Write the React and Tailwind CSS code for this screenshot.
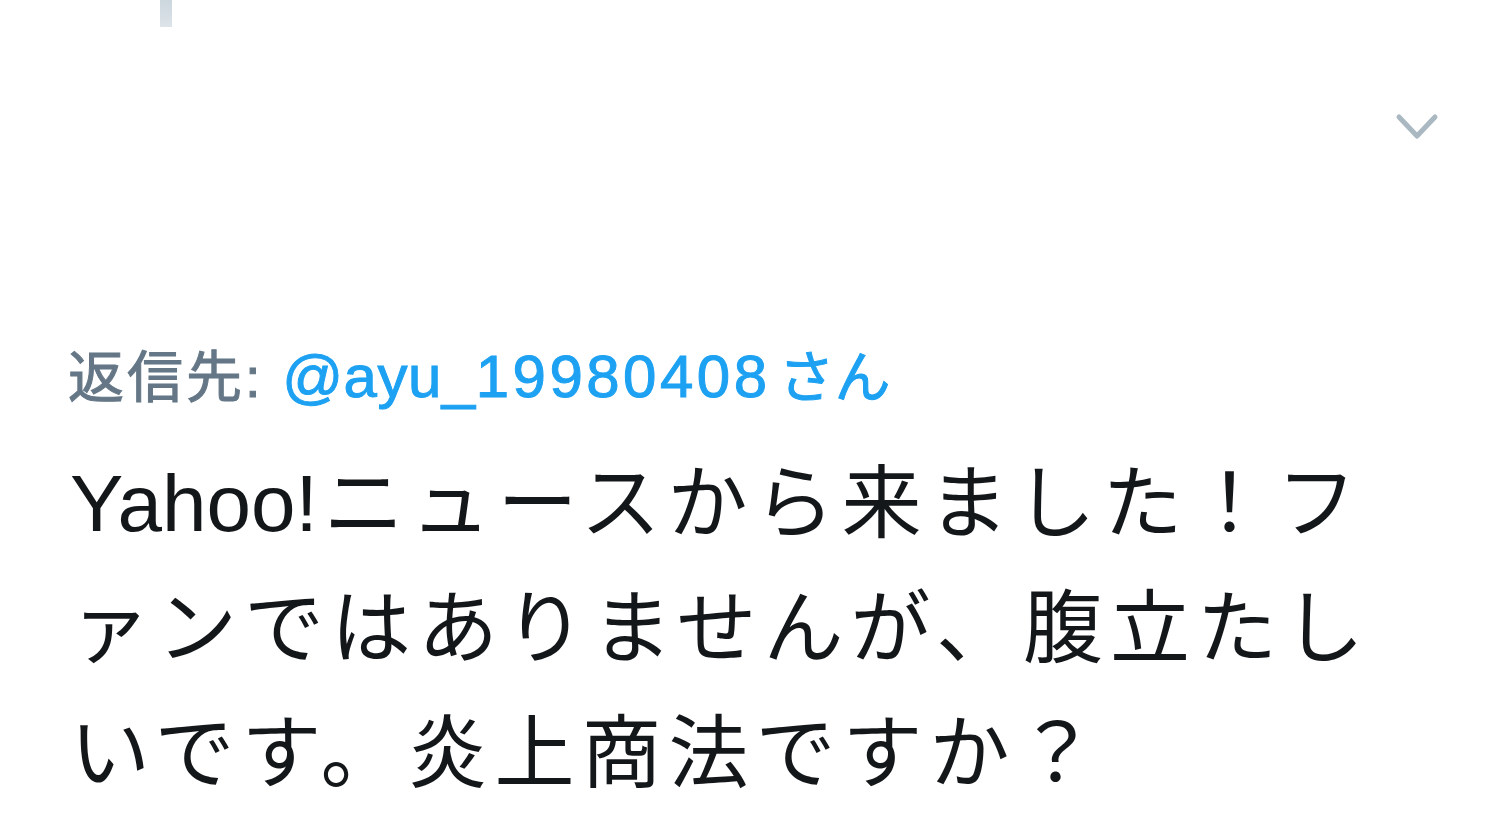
import React from 'react';

const font = { fontFamily: '"Liberation Sans", "Noto Sans CJK JP", sans-serif' };

const Chevron = () => (
    <svg width="46" height="30" viewBox="0 0 46 30" fill="none">
        <path d="M5 5 L23 24 L41 5" stroke="#aab8c2" strokeWidth="5" strokeLinecap="round" strokeLinejoin="round" />
    </svg>
);

const App = () => {
    return (
        <div className="w-[1500px] h-[834px] bg-white overflow-hidden" style={font}>
            {/* thread line from the tweet above */}
            <div className="h-[27px]">
                <div className="ml-[160px] w-[12px] h-full bg-gradient-to-b from-[#ccd6dd] to-[#dde4ea]" />
            </div>

            {/* caret */}
            <div className="flex justify-end pr-[60px] pt-[85px]">
                <Chevron />
            </div>

            {/* reply to */}
            <div className="mt-[200px] pl-[68px] text-[56px] leading-[70px] whitespace-nowrap [-webkit-text-stroke:1px_currentColor]">
                <span className="text-[#657786] tracking-[3px]">返信先: </span>
                <span className="text-[#1da1f2]">
                    <span className="text-[60px] tracking-[0.5px]">@ayu_</span>
                    <span className="text-[60px] tracking-[3.5px]">19980408</span>
                    <span className="ml-[8px]">さん</span>
                </span>
            </div>

            {/* tweet body */}
            <div className="mt-[28px] pl-[70px] text-[80px] leading-[125px] text-[#14171a] whitespace-nowrap">
                <div>
                    <span className="mr-[6px]">Yahoo!</span>
                    <span className="tracking-[7px]">ニュースから来ました！フ</span>
                </div>
                <div className="tracking-[7px]">ァンではありませんが、腹立たし</div>
                <div className="tracking-[7px]">いです。炎上商法ですか？</div>
            </div>
        </div>
    );
};

export default App;
